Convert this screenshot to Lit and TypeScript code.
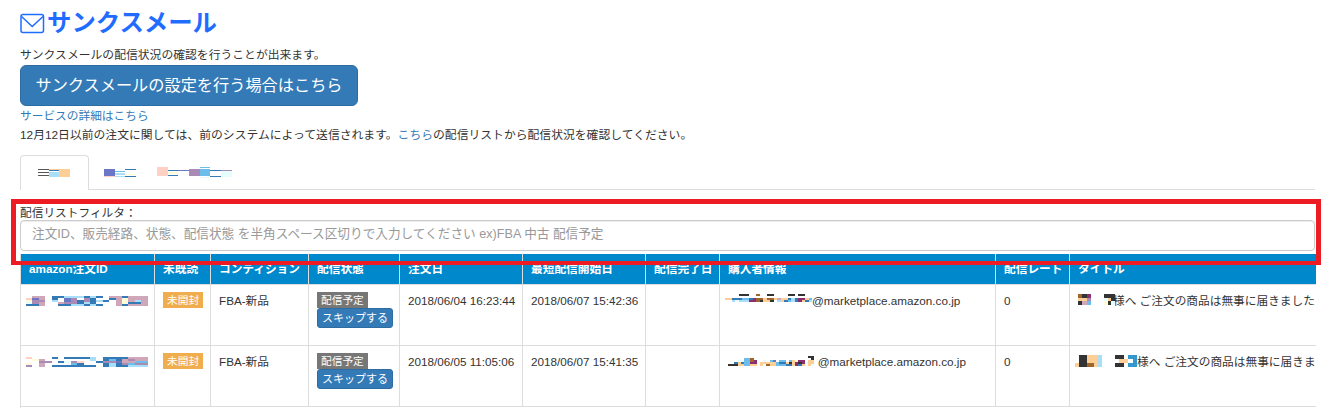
import { LitElement, html, css, svg } from "lit";
import { customElement } from "lit/decorators.js";

const P: Record<string, string> = {
  b: "#337ab7", l: "#a8def8", p: "#a98bb5", r: "#d0a7b8", y: "#fffbd6", o: "#fdcf94",
  w: "#e6fdff", i: "#6b76c4", d: "#333333", g: "#555555", s: "#ffd0c4", c: "#6cbcec",
  n: "#a0642d", m: "#8b2f6e", t: "#3399cc",
};

function mosaic(cols: string[], cw: number, ch: number, cls = "") {
  const rows = Math.max(...cols.map((c) => c.length));
  const w = cols.length * cw;
  const h = rows * ch;
  return html`<svg class="mosaic ${cls}" width=${w} height=${h} viewBox="0 0 ${w} ${h}" shape-rendering="crispEdges">
    ${cols.map((col, x) =>
      [...col].map((k, y) =>
        P[k] ? svg`<rect x=${x * cw} y=${y * ch} width=${cw} height=${ch} fill=${P[k]}></rect>` : null
      )
    )}
  </svg>`;
}

const T1 = ["g..g..g.", "ob.lllll", "oooooooo"];
const T2 = ["iiiiiiis", "..c.ll.l", "b....y.b"];
const T3 = ["sssssssss..", "...b.yy.b..", "...i.......", "..ppppppp..", "c.ccccccc.w", "...b.....b.", "...pwwwwww."];

const ID1 = [".sywb", "rippb", "rrprr", ".....", "bbl..", "b..rb", "liipb", "lpppl", "l.bbl", "bpplb", "lbbbl", "b.l.b", "..b..", "rb...", "rrrrr", "byyyb", "rrrbr", "rrlbr", "rrrrr"];
const ID2 = ["s..yp", ".y...", ".rprr", "..p..", "b...b", "..b.b", "b.w.b", "b.pcb", "b.sbb", "b...b", "ll..b", "..b..", "bbpbb", "bcpll", "bbibb", "brrpb", "rprcl", "rrcpl", "rrcpl"];
const EM1 = ["..o.", "..o.", "..bl", "..bw", "d.bl", "d.cl", "d.cl", "..bm", "..mm", "n.nn", "..nd", "..oo", "d.no", "d.nd", "..o.", "..rl", "..oo", "..ob", "d.bc", "d.ll", "..bb", "d.mm", "d.mo", "..ob", "..cl"];
const EM2 = ["....d", "....d", "...bd", "..woo", "..wbo", ".cccc", ".cccc", ".nnmo", "..mmo", ".....", "...oo", "..wow", "...on", "..coo", "..ioo", "...cc", "..cbc", "..cbc", "...ob", "..cdb", "..ooo", "..ymm", "..mdb", "..mmo", "...ww", "d.ooo", "ddoow"];
const TI1 = ["nod", "dor", "mpc"];
const TI1B = ["dwy", "dod", "ddw"];
const TI2 = ["..o", "ddd", "ddd", "oon", "oon", "ooo", "lll"];
const TI2B = ["d.d", "dod", ".o.", "t.t", "ttt"];

type Row = { id: string[]; date: string; start: string; em: string[]; emCls: string; emw: number; emh: number; domain: string; ti: string[]; tiw: number; tih: number; tib: string[]; tibw: number; tibh: number; title: string; tCls: string };
const ROWS: Row[] = [
  { id: ID1, date: "2018/06/04 16:23:44", start: "2018/06/07 15:42:36", em: EM1, emCls: "em1", emw: 3.48, emh: 2, domain: "@marketplace.amazon.co.jp",
    ti: TI1, tiw: 4.3, tih: 3.7, tib: TI1B, tibw: 3.7, tibh: 3.7, title: "様へ ご注文の商品は無事に届きました", tCls: "over" },
  { id: ID2, date: "2018/06/05 11:05:06", start: "2018/06/07 15:41:35", em: EM2, emCls: "em2", emw: 3.2, emh: 2, domain: " @marketplace.amazon.co.jp",
    ti: TI2, tiw: 3.86, tih: 4, tib: TI2B, tibw: 4.4, tibh: 4, title: "様へ ご注文の商品は無事に届きま", tCls: "" },
];
const HEADS = ["amazon注文ID", "未既読", "コンディション", "配信状態", "注文日", "最短配信開始日", "配信完了日", "購入者情報", "配信レート", "タイトル"];

@customElement("app-root")
export class AppRoot extends LitElement {
  static styles = css`
    :host { display: block; position: relative; height: 408px; overflow: hidden; background: #fff; color: #333;
      font: 11.7px/17px "Liberation Sans", "Noto Sans CJK JP", sans-serif; }
    .page { padding: 7px 28px 0 20px; }
    a { color: #337ab7; text-decoration: none; }
    h1 { margin: 0 0 8px; height: 32px; display: flex; align-items: center; color: #1f6cff; font-size: 24.4px; line-height: 32px; font-weight: 700; }
    h1 svg { flex: none; margin-right: 2px; }
    p { margin: 0; font-size: 11.82px; }
    .btn { display: block; width: 338px; height: 41px; box-sizing: border-box; margin: 1px 0 0; border: 1px solid #2e6da4; border-radius: 6px;
      background: #337ab7; color: #fff; font: inherit; font-size: 16.2px; line-height: 39px; text-align: center; padding: 0; }
    .svc { margin-top: 0; padding-top: 1px; display: block; }
    .note { margin-top: 3px; }
    .tabs { display: flex; margin-top: 11px; height: 35px; border-bottom: 1px solid #ddd; box-sizing: border-box; }
    .tab { display: flex; align-items: center; justify-content: center; height: 35px; box-sizing: border-box; }
    .tab.active { width: 69px; border: 1px solid #ddd; border-bottom: 0; border-radius: 4px 4px 0 0; background: #fff; }
    .tab.t2 { width: 63px; justify-content: flex-start; padding-left: 15px; }
    .tab.t3 { justify-content: flex-start; padding-left: 5px; }
    .mosaic { display: block; flex: none; }
    label { display: block; margin-top: 15px; line-height: 15px; }
    .input { height: 31px; box-sizing: border-box; border: 1px solid #ccc; border-radius: 4px; padding: 0 11px; font-size: 12.65px;
      line-height: 27px; color: #999; box-shadow: inset 0 1px 1px rgba(0,0,0,.075); white-space: nowrap; overflow: hidden; }
    table { margin-top: 3px; width: 1295px; border-collapse: collapse; table-layout: fixed; }
    th { box-sizing: border-box; background: #0088cc; color: #fff; font-weight: 700; height: 30px; padding: 0 8px; text-align: left; border: 1px solid #ddd; border-top: 0; white-space: nowrap; overflow: hidden; }
    td { height: 61px; box-sizing: border-box; vertical-align: top; padding: 7px 8px; border: 1px solid #ddd; white-space: nowrap; overflow: hidden; }
    th:last-child, td:last-child { border-right: 0; }
    .cell-mos { display: flex; align-items: flex-start; height: 17px; white-space: pre; }
    .id-m { margin-left: -3px; padding-top: 4px; }
    .em1 { margin: 2px 0 0 -3px; }
    .em2 { margin-top: 3px; }
    .label { display: block; width: max-content; font-size: 10.7px; line-height: 16px; height: 16px; color: #fff; padding: 0 4px; }
    .warn { background: #f0ad4e; }
    .plan { background: #777; }
    .skip { display: block; width: 76px; height: 20px; box-sizing: border-box; border: 1px solid #2e6da4; border-radius: 3px; background: #337ab7;
      color: #fff; font: inherit; font-size: 11px; line-height: 18px; padding: 0; text-align: center; }
    .gap { width: 13px; flex: none; }
    .ttl { display: flex; align-items: center; height: 17px; }
    .ttl.r2 { margin-left: -3px; }
    .ttl .tib { position: relative; background: #fff; }
    .over { margin-left: -2px; }
    .red { position: absolute; left: 11px; top: 199px; width: 1310px; height: 66px; box-sizing: border-box; border: 5px solid #ed1c24; border-bottom-width: 4px; pointer-events: none; }
  `;

  render() {
    return html`
      <div class="page">
        <h1>
          <svg width="25" height="21" viewBox="0 0 25 21" fill="none" stroke="#1f6cff" stroke-width="1.5">
            <rect x="1" y="1.5" width="22.5" height="18" rx="2"></rect>
            <path d="M1.5 3.5 12.2 13.5 23 3.5"></path>
          </svg>
          <span>サンクスメール</span>
        </h1>
        <p>サンクスメールの配信状況の確認を行うことが出来ます。</p>
        <button class="btn">サンクスメールの設定を行う場合はこちら</button>
        <a class="svc" href="#">サービスの詳細はこちら</a>
        <p class="note">12月12日以前の注文に関しては、前のシステムによって送信されます。<a href="#">こちら</a>の配信リストから配信状況を確認してください。</p>
        <div class="tabs">
          <div class="tab active">${mosaic(T1, 10.7, 1)}</div>
          <div class="tab t2">${mosaic(T2, 10.7, 1)}</div>
          <div class="tab t3">${mosaic(T3, 10.7, 1)}</div>
        </div>
        <label>配信リストフィルタ：</label>
        <div class="input">注文ID、販売経路、状態、配信状態 を半角スペース区切りで入力してください ex)FBA 中古 配信予定</div>
        <table>
          <colgroup>
            ${[134, 56, 98, 91, 123, 123, 74, 276, 74, 246].map((w) => html`<col style="width:${w}px" />`)}
          </colgroup>
          <tr>${HEADS.map((h) => html`<th>${h}</th>`)}</tr>
          ${ROWS.map(
            (r, i) => html`<tr>
              <td><div class="cell-mos id-m">${mosaic(r.id, 6.4, 2)}</div></td>
              <td><span class="label warn">未開封</span></td>
              <td>FBA-新品</td>
              <td><span class="label plan">配信予定</span><button class="skip">スキップする</button></td>
              <td>${r.date}</td>
              <td>${r.start}</td>
              <td></td>
              <td><div class="cell-mos">${mosaic(r.em, r.emw, r.emh, r.emCls)}<span>${r.domain}</span></div></td>
              <td>0</td>
              <td><div class="ttl ${i ? "r2" : ""}">${mosaic(r.ti, r.tiw, r.tih)}<span class="gap"></span>${mosaic(r.tib, r.tibw, r.tibh, "tib")}<span class=${r.tCls}>${r.title}</span></div></td>
            </tr>`
          )}
          <tr><td colspan="10"></td></tr>
        </table>
      </div>
      <div class="red"></div>
    `;
  }
}
